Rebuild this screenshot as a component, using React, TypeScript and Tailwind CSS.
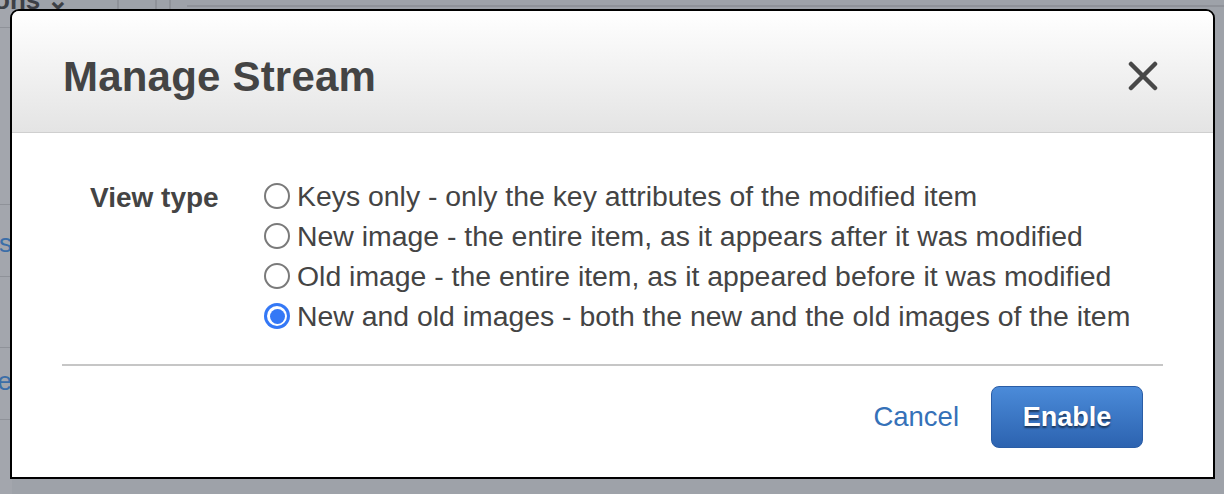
import React, { useState } from 'react';

const OPTIONS: { id: string; label: string }[] = [
  { id: 'KEYS_ONLY', label: 'Keys only - only the key attributes of the modified item' },
  { id: 'NEW_IMAGE', label: 'New image - the entire item, as it appears after it was modified' },
  { id: 'OLD_IMAGE', label: 'Old image - the entire item, as it appeared before it was modified' },
  { id: 'NEW_AND_OLD_IMAGES', label: 'New and old images - both the new and the old images of the item' },
];

const font = { fontFamily: '"Liberation Sans", Arial, Helvetica, sans-serif' };

function Radio({ checked }: { checked: boolean }) {
  if (checked) {
    return (
      <span className="flex h-[26px] w-[26px] shrink-0 items-center justify-center rounded-full bg-[#3478f6]">
        <span className="flex h-[20px] w-[20px] items-center justify-center rounded-full bg-white">
          <span className="h-[15px] w-[15px] rounded-full bg-[#3478f6]" />
        </span>
      </span>
    );
  }
  return <span className="h-[26px] w-[26px] shrink-0 rounded-full border-2 border-[#7a7a7a] bg-white" />;
}

export default function App() {
  const [view, setView] = useState('NEW_AND_OLD_IMAGES');

  return (
    <div className="relative h-[494px] w-[1224px] overflow-hidden bg-[#9ea2a9]" style={font}>
      {/* page behind the overlay */}
      <div className="flex h-full">
        <div className="flex w-[12px] flex-col overflow-hidden bg-[#a3a6ad]">
          <div className="h-[28px] border-b border-[#8f9299]" />
          <div className="h-[177px] border-b border-[#8f9299]" />
          <div className="flex h-[72px] justify-end border-b border-[#8f9299]">
            <span className="whitespace-nowrap text-[26px] leading-[76px] text-[#3b6ea8]">ss</span>
          </div>
          <div className="h-[71px] border-b border-[#8f9299]" />
          <div className="flex h-[72px] justify-end border-b border-[#8f9299]">
            <span className="whitespace-nowrap text-[26px] leading-[66px] text-[#3b6ea8]">e</span>
          </div>
        </div>
        <div className="flex flex-1 flex-col">
          <div className="flex h-[8px] items-start">
            <span className="-ml-[18px] -mt-[14px] whitespace-nowrap text-[26px] font-bold leading-[28px] text-[#3d4046]">
              ons ⌄
            </span>
            <span className="ml-[48px] h-[28px] w-[2px] bg-[#8f9299]" />
            <span className="ml-[36px] h-[28px] w-[2px] bg-[#8f9299]" />
            <span className="ml-[12px] h-[28px] w-[2px] bg-[#8f9299]" />
            <span className="ml-[16px] mt-[5px] h-[2px] flex-1 bg-[#8f9299]" />
          </div>
        </div>
      </div>

      {/* modal */}
      <div className="absolute left-[10px] top-[9px] flex h-[470px] w-[1205px] flex-col rounded-t-[9px] border-2 border-black bg-white">
        <div className="flex h-[122px] items-center justify-between rounded-t-[7px] border-b border-[#cfcfcf] bg-gradient-to-b from-white to-[#e4e4e4] pl-[51px] pr-[55px] pt-[10px]">
          <h1 className="text-[42px] font-bold tracking-[0.2px] text-[#444]">Manage Stream</h1>
          <svg width="30" height="30" viewBox="0 0 30 30" className="mb-[2px]">
            <path d="M3 3 L27 27 M27 3 L3 27" stroke="#484848" strokeWidth="4.5" strokeLinecap="round" />
          </svg>
        </div>

        <div className="flex pl-[78px] pt-[43px]">
          <div className="w-[174px] text-[28px] font-bold leading-[44px] text-[#444]">View type</div>
          <div className="flex flex-col">
            {OPTIONS.map((o) => (
              <label
                key={o.id}
                onClick={() => setView(o.id)}
                className="flex h-[40px] cursor-pointer items-center gap-[7px] text-[28.4px] text-[#444]"
              >
                <Radio checked={view === o.id} />
                <span>{o.label}</span>
              </label>
            ))}
          </div>
        </div>

        <div className="mx-[50px] mt-[28px] h-[2px] bg-[#c6c6c6]" />

        <div className="flex items-center justify-end gap-[32px] pr-[70px] pt-[20px]">
          <button className="text-[27.5px] text-[#3571b8]">Cancel</button>
          <button className="flex h-[62px] w-[152px] items-center justify-center rounded-[8px] border border-[#2a5da6] bg-gradient-to-b from-[#4b8bd9] to-[#2c63b0] text-[27px] font-bold text-white [text-shadow:0_2px_2px_rgba(0,0,0,0.55)]">
            Enable
          </button>
        </div>
      </div>
    </div>
  );
}
